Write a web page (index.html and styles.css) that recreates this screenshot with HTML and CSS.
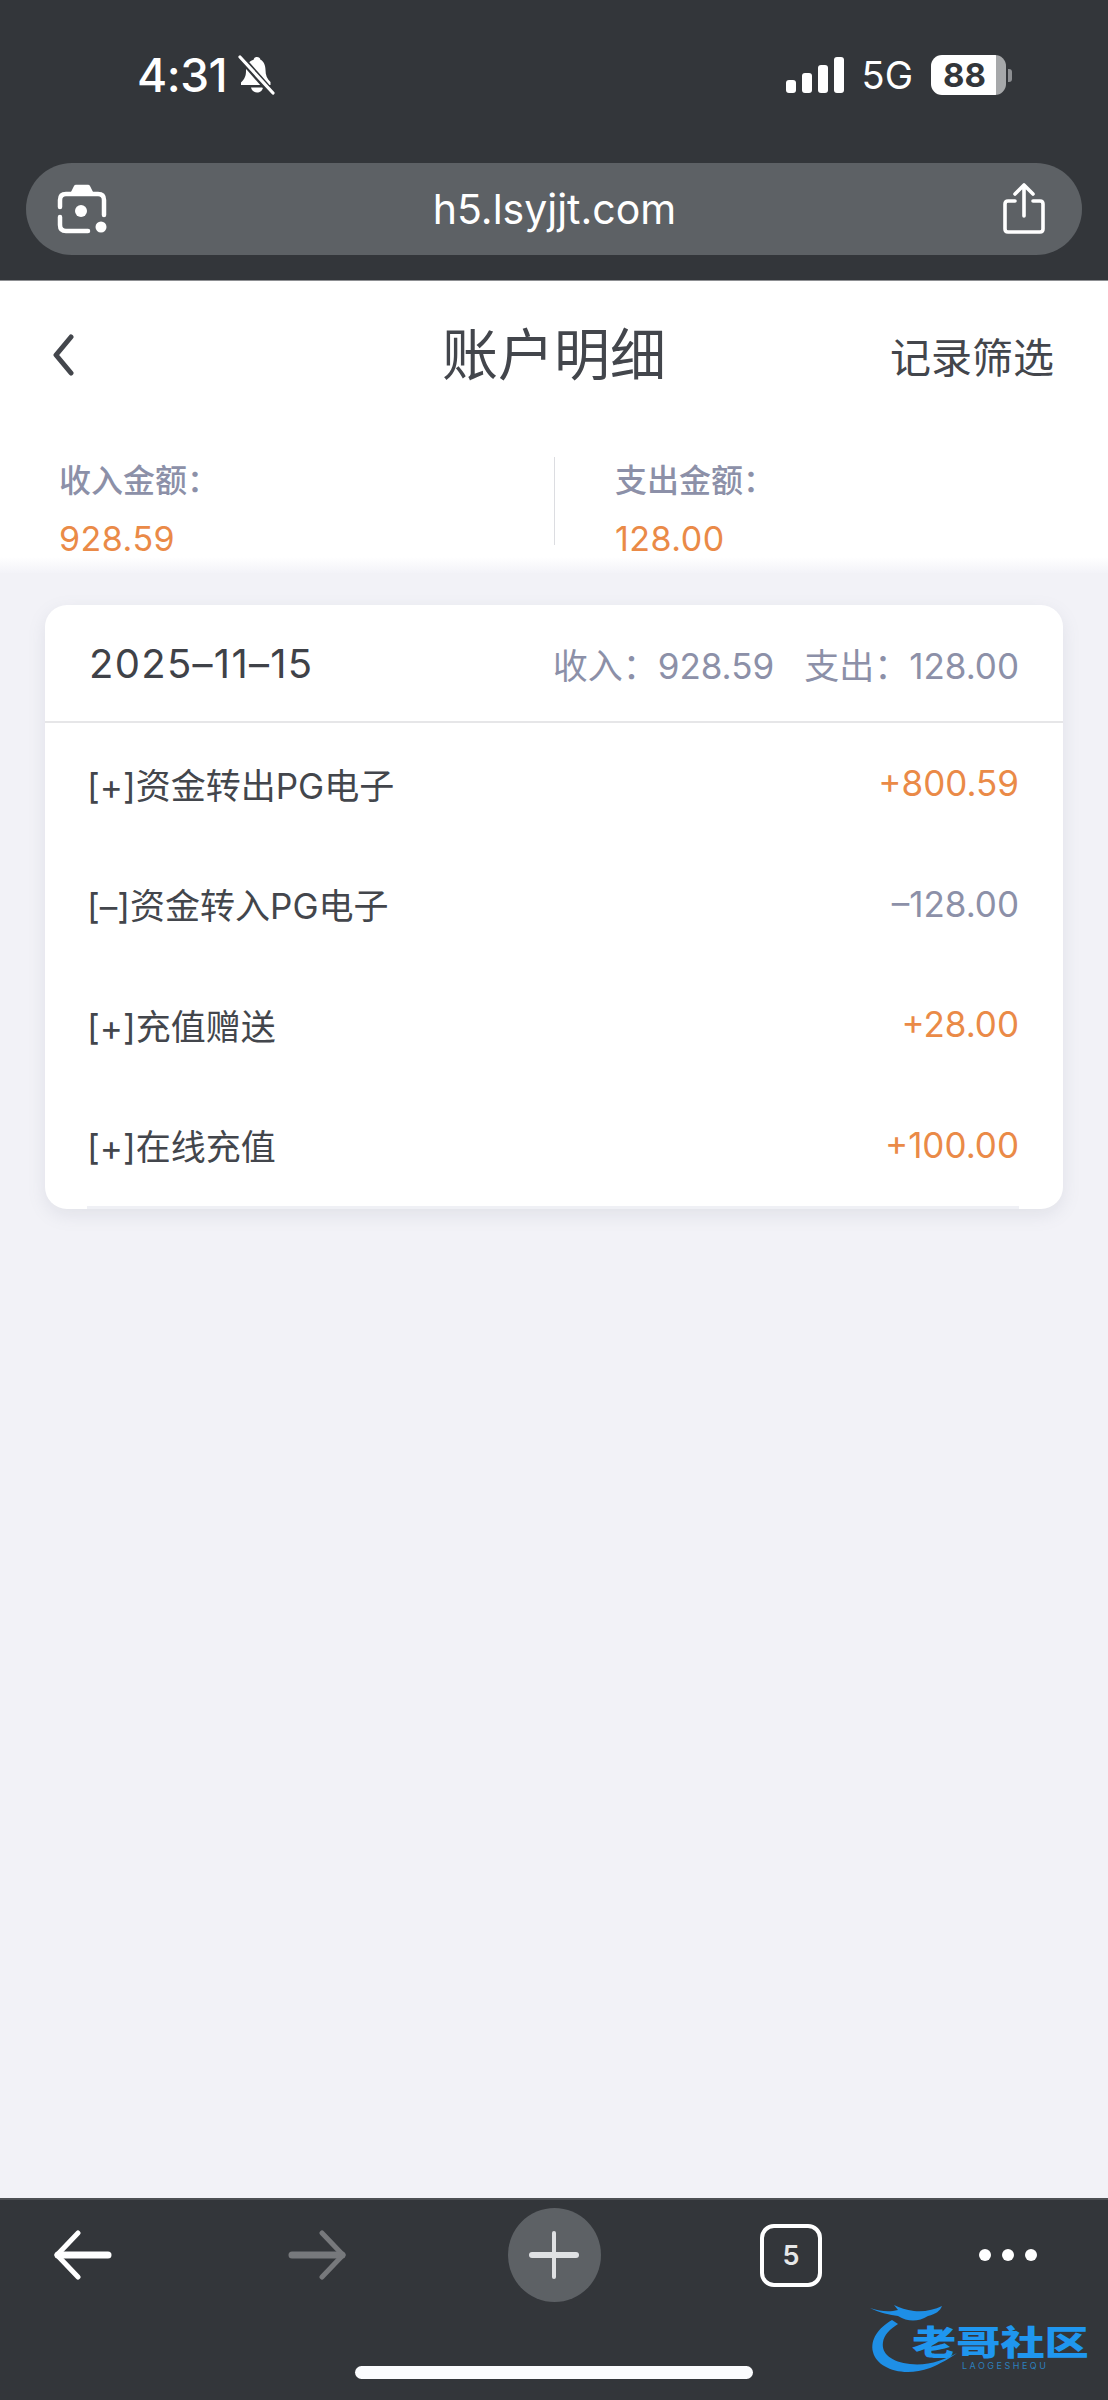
FILE: index.html
```html
<!DOCTYPE html>
<html lang="zh-CN">
<head>
    <meta charset="UTF-8">
    <meta name="viewport" content="width=device-width, initial-scale=1.0">
    <title>账户明细</title>
    <link rel="stylesheet" href="styles.css">
</head>
<body>
    <div class="browser-top">
        <div class="status-bar">
            <div class="status-left">
                <span class="time">4:31</span>
                <svg class="bell" width="38" height="40" viewBox="0 0 38 40">
                    <path d="M19 2c-2 0-3 1-3.400 2.800C10 6.500 8 11 8 16c0 5-1.500 8-5 11.500V30h29.500V27c-3.500-3-5-7-5-12 0-5-2-9-5-10.300C22 3 21 2 19 2z" fill="#fff"/>
                    <path d="M13 32.500c.5 3 3 5 6 5s5.500-2 6-5z" fill="#fff"/>
                    <path d="M3 3l31 35" stroke="#33363a" stroke-width="7"/>
                    <path d="M2 2l33 36" stroke="#fff" stroke-width="3.200" stroke-linecap="round"/>
                </svg>
            </div>
            <div class="status-right">
                <div class="signal">
                    <i class="bar bar-1"></i>
                    <i class="bar bar-2"></i>
                    <i class="bar bar-3"></i>
                    <i class="bar bar-4"></i>
                </div>
                <span class="network">5G</span>
                <div class="battery">
                    <div class="battery-body"><span>88</span></div>
                    <i class="battery-cap"></i>
                </div>
            </div>
        </div>
        <div class="url-bar">
            <svg width="50" height="50" viewBox="0 0 50 50" fill="none" stroke="#fff" stroke-width="4.500" stroke-linecap="round">
                <path d="M3 23v-7c0-4 2-6 6-6h32c4 0 6 2 6 6v15"/>
                <path d="M16 9l3-6h12l3 6" fill="#fff" stroke-linejoin="round"/>
                <path d="M3 33v8c0 4 2 6 6 6h22"/>
                <circle cx="24" cy="27" r="6" fill="#fff" stroke="none"/>
                <circle cx="44" cy="43" r="5.500" fill="#fff" stroke="none"/>
            </svg>
            <span class="url">h5.lsyjjt.com</span>
            <svg width="44" height="52" viewBox="0 0 44 52" fill="none" stroke="#fff" stroke-width="3.600" stroke-linecap="round" stroke-linejoin="round">
                <path d="M13 18H6c-2 0-3 1-3 3v25c0 2 1 3 3 3h32c2 0 3-1 3-3V21c0-2-1-3-3-3h-7"/>
                <path d="M22 33V3M13 11l9-9 9 9"/>
            </svg>
        </div>
    </div>

    <main class="page">
        <header class="head">
            <div class="title-row">
                <svg class="back" width="26" height="42" viewBox="0 0 26 42" fill="none" stroke="#43464c" stroke-width="5" stroke-linecap="round" stroke-linejoin="round">
                    <path d="M21 3L6 21l15 18"/>
                </svg>
                <h1 class="title">账户明细</h1>
                <a class="filter">记录筛选</a>
            </div>
            <div class="totals">
                <div class="total">
                    <div class="total-label">收入金额：</div>
                    <div class="total-value">928.59</div>
                </div>
                <div class="total total-out">
                    <div class="total-label">支出金额：</div>
                    <div class="total-value">128.00</div>
                </div>
            </div>
        </header>

        <section class="card">
            <div class="card-head">
                <span class="date">2025–11–15</span>
                <div class="summary">
                    <span>收入：928.59</span>
                    <span>支出：128.00</span>
                </div>
            </div>
            <ul class="rows">
                <li class="row"><span>[+]资金转出PG电子</span><span class="amount plus">+800.59</span></li>
                <li class="row"><span>[–]资金转入PG电子</span><span class="amount minus">–128.00</span></li>
                <li class="row"><span>[+]充值赠送</span><span class="amount plus">+28.00</span></li>
                <li class="row"><span>[+]在线充值</span><span class="amount plus">+100.00</span></li>
            </ul>
        </section>
    </main>

    <footer class="toolbar">
        <div class="tools">
            <svg width="60" height="50" viewBox="0 0 60 50" fill="none" stroke="#fff" stroke-width="5" stroke-linecap="round" stroke-linejoin="round">
                <path d="M26 3L5 25l21 22"/>
                <path d="M6 25h50" stroke-width="7"/>
            </svg>
            <svg width="60" height="50" viewBox="0 0 60 50" fill="none" stroke="#77797c" stroke-width="5" stroke-linecap="round" stroke-linejoin="round">
                <path d="M34 3l21 22-21 22"/>
                <path d="M4 25h50" stroke-width="7"/>
            </svg>
            <div class="plus-btn">
                <svg width="50" height="50" viewBox="0 0 50 50" stroke="#dfe1e3" stroke-linecap="round">
                    <path d="M25 3v44" stroke-width="4"/>
                    <path d="M3 25h44" stroke-width="6"/>
                </svg>
            </div>
            <div class="tabs">5</div>
            <div class="more"><i></i><i></i><i></i></div>
        </div>
        <div class="home-bar"></div>
        <div class="watermark">
            <svg class="wm-dragon" width="100" height="80" viewBox="0 0 100 80">
                <path d="M24 20C10 28 2 40 5 52C9 68 34 78 62 68C72 64 82 58 89 53C76 60 60 66 42 64C24 62 13 54 15 42C16 35 22 29 30 24Z" fill="#1e8fe6"/>
                <path d="M2 8C14 12 22 12 30 10L26 5C32 8 38 10 46 11C56 12 66 10 74 6C72 11 68 14 60 16C50 22 40 22 30 16C22 15 12 13 2 8Z" fill="#1e8fe6"/>
            </svg>
            <div class="wm-name">老哥社区</div>
            <div class="wm-sub">LAOGESHEQU</div>
        </div>
    </footer>
</body>
</html>
```

FILE: styles.css
```css
* {
    box-sizing: border-box;
}
body {
    margin: 0;
    width: 1108px;
    height: 2400px;
    display: flex;
    flex-direction: column;
    overflow: hidden;
    font-family: Inter, "Noto Sans CJK SC", sans-serif;
    background-color: #f2f2f7;
    color: #43464c;
}
.browser-top {
    height: 281px;
    background-color: #33363a;
    padding: 50px 26px 0;
    border-bottom: 1px solid #8d8f92;
}
.status-bar {
    height: 50px;
    display: flex;
    justify-content: space-between;
    align-items: center;
    padding: 0 70px 0 111px;
    color: #fff;
}
.status-left {
    display: flex;
    align-items: center;
    gap: 11px;
}
.time {
    font-size: 46px;
    font-weight: 500;
    letter-spacing: -0.5px;
}
.status-right {
    display: flex;
    align-items: center;
}
.signal {
    display: flex;
    align-items: flex-end;
    gap: 6px;
    height: 36px;
}
.bar {
    width: 10px;
    background-color: #fff;
    border-radius: 3px;
}
.bar-1 { height: 13px; }
.bar-2 { height: 20px; }
.bar-3 { height: 28px; }
.bar-4 { height: 36px; }
.network {
    font-size: 38px;
    margin-left: 18px;
    font-weight: 400;
}
.battery {
    display: flex;
    align-items: center;
    margin-left: 18px;
    gap: 2px;
}
.battery-body {
    width: 75px;
    height: 40px;
    border-radius: 11px;
    background: linear-gradient(to right, #fff 87%, #a6a8aa 87%);
    color: #33363a;
    font-size: 33px;
    font-weight: 700;
    line-height: 40px;
    padding-left: 12px;
}
.battery-cap {
    width: 4px;
    height: 13px;
    background-color: #8d8f92;
    border-radius: 0 3px 3px 0;
}
.url-bar {
    height: 92px;
    margin-top: 63px;
    border-radius: 46px;
    background-color: #5d6165;
    display: flex;
    justify-content: space-between;
    align-items: center;
    padding: 0 36px 0 31px;
}
.url {
    color: #fff;
    font-size: 41px;
    font-weight: 400;
}

.page {
    flex: 1;
}
.head {
    height: 292px;
    background: linear-gradient(#fff 276px, #f3f3f8 292px);
}
.title-row {
    height: 148px;
    display: grid;
    grid-template-columns: 1fr auto 1fr;
    align-items: center;
    padding: 0 54px;
}
.back {
    margin-left: -4px;
}
.title {
    margin: 0;
    font-size: 56px;
    font-weight: 400;
    line-height: 1;
}
.filter {
    justify-self: end;
    font-size: 41px;
    color: #43464c;
}
.totals {
    display: flex;
    margin-top: 28px;
    height: 88px;
}
.total {
    width: 554px;
    padding: 4px 0 0 59px;
}
.total-out {
    border-left: 1px solid #dcdde1;
    padding-left: 60px;
}
.total-label {
    font-size: 32px;
    font-weight: 500;
    line-height: 40px;
    color: #8c90a8;
}
.total-value {
    font-size: 34px;
    letter-spacing: 0.5px;
    line-height: 40px;
    margin-top: 18px;
    color: #ea8a47;
}

.card {
    margin: 32px 45px 0;
    background-color: #fff;
    border-radius: 22px;
    box-shadow: 0 6px 18px rgba(120, 125, 150, 0.14);
    height: 604px;
}
.card-head {
    height: 118px;
    display: flex;
    justify-content: space-between;
    align-items: center;
    padding: 0 44px;
    border-bottom: 2px solid #e6e6e8;
}
.date {
    font-size: 40px;
    letter-spacing: 1.300px;
    color: #3f4248;
}
.summary {
    display: flex;
    gap: 30px;
    font-size: 35px;
    color: #8c90a8;
}
.rows {
    list-style: none;
    margin: 0;
    padding: 0 44px 0 42px;
}
.row {
    height: 120.500px;
    display: flex;
    justify-content: space-between;
    align-items: center;
    font-size: 35px;
}
.row:last-child {
    height: 124px;
    padding-bottom: 1px;
    border-bottom: 3px solid #eff0f5;
}
.amount {
    font-size: 35px;
}
.plus {
    color: #ea8a47;
}
.minus {
    color: #8c90a8;
}

.toolbar {
    height: 202px;
    background-color: #33363a;
    border-top: 2px solid #4d5054;
    position: relative;
}
.tools {
    display: grid;
    grid-template-columns: 164px 308px 164px 310px 124px;
    justify-items: center;
    align-items: center;
    height: 110px;
}
.plus-btn {
    width: 93px;
    height: 94px;
    border-radius: 50%;
    background-color: #5d6165;
    display: flex;
    align-items: center;
    justify-content: center;
}
.tabs {
    width: 62px;
    height: 63px;
    border: 4.500px solid #fff;
    border-radius: 14px;
    color: #e6e7e8;
    font-size: 27px;
    font-weight: 600;
    display: flex;
    align-items: center;
    justify-content: center;
}
.more {
    display: flex;
    gap: 11px;
}
.more i {
    width: 12px;
    height: 12px;
    border-radius: 50%;
    background-color: #fff;
}
.home-bar {
    width: 398px;
    height: 13px;
    margin: 56px auto 0;
    border-radius: 7px;
    background-color: #fbfcfe;
}

/* site watermark pasted over the toolbar */
.watermark {
    position: absolute;
    left: 868px;
    top: 100px;
    width: 236px;
    height: 80px;
}
.wm-dragon {
    position: absolute;
    left: 0;
    top: 0;
}
.wm-name {
    position: absolute;
    left: 44px;
    top: 28px;
    font-size: 34px;
    line-height: 30px;
    font-weight: 900;
    white-space: nowrap;
    color: #1f96ef;
    transform: scaleX(1.3);
    transform-origin: left top;
}
.wm-sub {
    position: absolute;
    left: 94px;
    top: 61px;
    font-size: 9px;
    line-height: 9px;
    letter-spacing: 2.500px;
    color: #2d7fbd;
}
```
